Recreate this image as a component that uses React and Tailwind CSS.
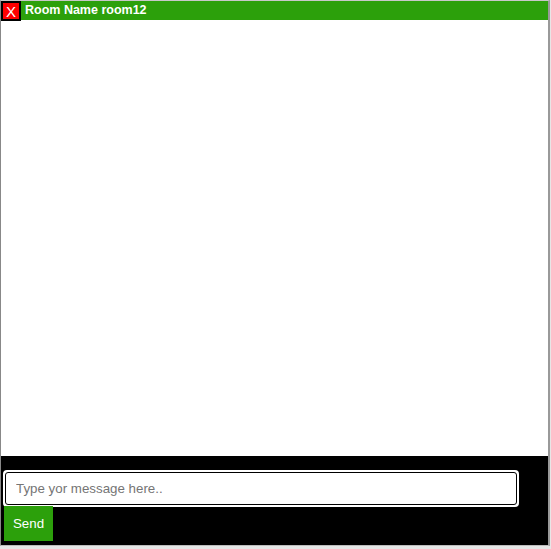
import React, { useState } from 'react';

const App = () => {
    const [message, setMessage] = useState('');

    return (
        <div className="w-[551px] h-[549px] bg-[#e6e6e6]" style={{ fontFamily: '"Liberation Sans", Arial, sans-serif' }}>
            <div className="w-[550px] h-[546px] border-t border-l border-r-2 border-b border-t-[#c8c8c8] border-l-[#888] border-r-[#999] border-b-[#bbb] bg-white flex flex-col">
                {/* header */}
                <div className="flex items-stretch h-[20px]">
                    <button className="w-[20px] h-[20px] border border-black bg-black p-[1px] flex">
                        <span className="flex-1 bg-[#ff0000] text-white text-[15px] leading-[17px] flex items-center justify-center">X</span>
                    </button>
                    <div className="flex-1 bg-[#2ca00b] mt-[1px] text-white font-bold text-[12.5px] leading-[18px] pl-[4px] -translate-y-[1px]">
                        Room Name room12
                    </div>
                </div>

                {/* messages */}
                <div className="flex-1 bg-white"></div>

                {/* footer */}
                <div className="h-[89px] bg-black pt-[14px] px-[2px]">
                    <div className="w-[516px] rounded-[4px] border-2 border-white bg-white">
                        <input
                            value={message}
                            onChange={e => setMessage(e.target.value)}
                            placeholder="Type yor message here.."
                            className="w-full h-[33px] border border-black rounded-[3px] px-[10px] text-[13.33px] text-black placeholder:text-[#757575] outline-none"
                        />
                    </div>
                    <button className="ml-[1px] -mt-[1px] w-[49px] h-[35px] bg-[#2ca00b] text-white text-[13.33px]">
                        Send
                    </button>
                </div>
            </div>
        </div>
    );
};

export default App;
